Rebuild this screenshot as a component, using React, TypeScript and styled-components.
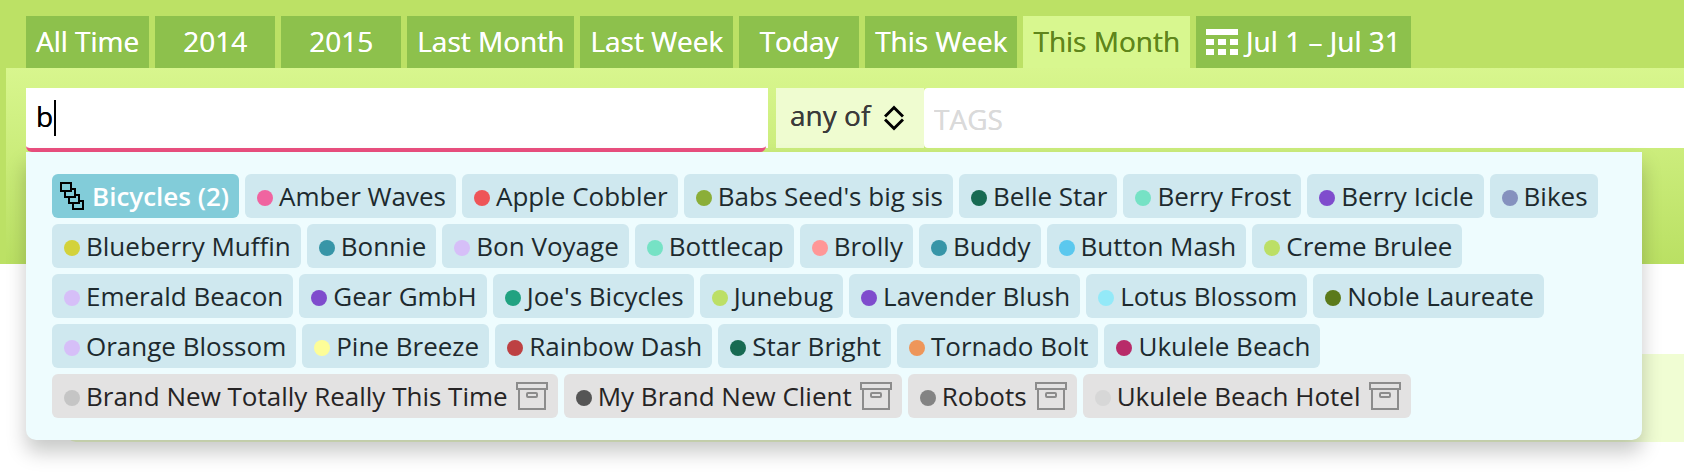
import React, { useState } from "react";
import styled, { createGlobalStyle, css } from "styled-components";

const GlobalStyle = createGlobalStyle`
  *, *::before, *::after { box-sizing: border-box; }
  body {
    margin: 0;
    background: #ffffff;
    font-family: "Open Sans", "Noto Sans", sans-serif;
    color: #1d2a2e;
    overflow-x: hidden;
  }
  button, input, select { font: inherit; color: inherit; }
`;

const Page = styled.main`
  position: relative;
  padding-bottom: 34px;
`;

const Header = styled.header`
  padding: 16px 0 0 6px;
  background: #bce165;
`;

const Tabs = styled.nav`
  display: flex;
  gap: 6px;
  padding-left: 20px;
`;

/* A shadow with no blur firms up the edges of the light-weight letters. */
const firmText = css`
  text-shadow: 0 0 0 currentColor;
`;

const Tab = styled.button<{ $active?: boolean }>`
  display: flex;
  align-items: center;
  justify-content: center;
  gap: 8px;
  min-width: 120px;
  height: 52px;
  padding: 0 10px;
  border: 0;
  font-size: 28px;
  line-height: 50px;
  white-space: nowrap;
  cursor: pointer;
  color: ${(p) => (p.$active ? "#5f861b" : "#ffffff")};
  background: ${(p) => (p.$active ? "#d8f78f" : "#8dc14c")};
  ${firmText}
`;

const TabLabel = styled.span`
  height: 52px;
`;

const FilterPanel = styled.section`
  position: relative;
  display: flex;
  min-height: 196px;
  padding: 20px 0 0 20px;
  align-items: flex-start;
  background: linear-gradient(#d8f68e, #bae063);
`;

const ClientField = styled.div`
  position: relative;
  flex: 0 0 742px;
  margin-right: 8px;
  height: 60px;
  background: #ffffff;
`;

const ClientInput = styled.input`
  display: block;
  width: calc(100% - 2px);
  height: 64px;
  padding: 0 10px 4px;
  border: 0;
  border-bottom: 4px solid #ea4f7f;
  border-radius: 0 0 6px 6px;
  outline: 0;
  background: transparent;
  font-size: 28px;
  color: #000000;
  caret-color: transparent;
  ${firmText}
`;

const Caret = styled.span`
  position: absolute;
  left: 28px;
  top: 12px;
  width: 2px;
  height: 36px;
  background: #000000;
`;

const ModeField = styled.div`
  position: relative;
  flex: 0 0 148px;
  height: 60px;
  background: #effcd0;
`;

const ModeSelect = styled.select`
  appearance: none;
  display: block;
  width: 100%;
  height: 100%;
  padding: 0 50px 6px 14px;
  border: 0;
  outline: 0;
  background: transparent;
  font-size: 28px;
  color: #3b3b3b;
  ${firmText}
`;

const ModeArrows = styled.svg`
  position: absolute;
  right: 20px;
  top: 17px;
  pointer-events: none;
`;

const TagsInput = styled.input`
  flex: 1;
  min-width: 0;
  height: 60px;
  padding: 2px 10px 0;
  border: 0;
  border-radius: 4px 0 0 4px;
  outline: 0;
  background: #ffffff;
  font-size: 28px;
  &::placeholder { color: #dadada; opacity: 1; ${firmText} }
`;

const Suggestions = styled.div`
  position: absolute;
  z-index: 2;
  left: 20px;
  right: 42px;
  top: 84px;
  display: flex;
  flex-wrap: wrap;
  gap: 6px;
  padding: 22px 26px;
  border-radius: 0 0 10px 10px;
  background: #eefcfe;
  box-shadow: 0 12px 20px rgba(0, 10, 0, 0.22);
`;

type Kind = "group" | "client" | "archived";

const chipKinds = {
  group: css`
    padding-left: 8px;
    gap: 8px;
    font-weight: 600;
    color: #ffffff;
    background: #82ccd9;
  `,
  client: css`
    background: #cfe8ef;
  `,
  archived: css`
    color: #262425;
    background: #e3e2e2;
  `,
};

const Chip = styled.button<{ $kind: Kind }>`
  display: flex;
  align-items: center;
  gap: 6px;
  height: 44px;
  padding: 0 10px 0 12px;
  border: 0;
  border-radius: 6px;
  font-size: 26px;
  line-height: 44px;
  white-space: nowrap;
  color: #1d2a2e;
  cursor: pointer;
  ${(p) => chipKinds[p.$kind]}
`;

const Dot = styled.span<{ $color: string }>`
  width: 16px;
  height: 16px;
  margin-top: 4px;
  border-radius: 50%;
  background: ${(p) => p.$color};
`;

const ArchiveMark = styled.svg`
  margin-left: 2px;
`;

const Report = styled.section`
  padding: 90px 0 0 66px;
`;

const ReportRow = styled.div`
  min-height: 88px;
  border-radius: 10px 0 0 10px;
  background: #f0fdd3;
`;

const CalendarIcon = () => (
  <svg width="32" height="26" viewBox="0 0 32 26" fill="currentColor" aria-hidden="true">
    <path d="M0 0h32v6H0zM0 10h8v6H0zM12 10h8v6h-8zM24 10h8v6h-8zM0 20h8v6H0zM12 20h8v6h-8zM24 20h8v6h-8z" />
  </svg>
);

const GroupIcon = () => (
  <svg width="24" height="28" viewBox="0 0 24 28" fill="#82ccd9" stroke="#000" strokeWidth="2" aria-hidden="true">
    <rect x="13" y="19" width="10" height="8" />
    <rect x="9" y="13" width="10" height="8" />
    <rect x="5" y="7" width="10" height="8" />
    <rect x="1" y="1" width="10" height="8" />
  </svg>
);

const ArchiveIcon = () => (
  <ArchiveMark width="32" height="28" viewBox="0 0 32 28" fill="none" stroke="#8c8c8c" strokeWidth="2" aria-hidden="true">
    <rect x="1" y="1" width="30" height="6" />
    <path d="M3 7v20h26V7" />
    <rect x="11" y="11" width="10" height="4" rx="1" />
  </ArchiveMark>
);

const tabs = ["All Time", "2014", "2015", "Last Month", "Last Week", "Today", "This Week", "This Month"];

const clients: [string, string][] = [
  ["Amber Waves", "#f064a0"],
  ["Apple Cobbler", "#ee5558"],
  ["Babs Seed's big sis", "#8bae38"],
  ["Belle Star", "#176a52"],
  ["Berry Frost", "#76e2c5"],
  ["Berry Icicle", "#7f4ccd"],
  ["Bikes", "#8591be"],
  ["Blueberry Muffin", "#d3d23b"],
  ["Bonnie", "#3795a7"],
  ["Bon Voyage", "#d6bff8"],
  ["Bottlecap", "#76e2c5"],
  ["Brolly", "#ff9797"],
  ["Buddy", "#3795a7"],
  ["Button Mash", "#5bc8ee"],
  ["Creme Brulee", "#bcdf66"],
  ["Emerald Beacon", "#d6bff8"],
  ["Gear GmbH", "#7f4ccd"],
  ["Joe's Bicycles", "#21a281"],
  ["Junebug", "#bcdf66"],
  ["Lavender Blush", "#7f4ccd"],
  ["Lotus Blossom", "#93e9f8"],
  ["Noble Laureate", "#5b7a1b"],
  ["Orange Blossom", "#d6bff8"],
  ["Pine Breeze", "#fdfd98"],
  ["Rainbow Dash", "#bd4143"],
  ["Star Bright", "#176a52"],
  ["Tornado Bolt", "#ee965a"],
  ["Ukulele Beach", "#b82b69"],
];

const archived: [string, string][] = [
  ["Brand New Totally Really This Time", "#c5c5c5"],
  ["My Brand New Client", "#555555"],
  ["Robots", "#838383"],
  ["Ukulele Beach Hotel", "#d7d7d7"],
];

export default function App() {
  const [active, setActive] = useState("This Month");
  const [query, setQuery] = useState("b");

  return (
    <>
      <GlobalStyle />
      <Page>
        <Header>
          <Tabs aria-label="Period">
            {tabs.map((name) => (
              <Tab key={name} type="button" $active={name === active} onClick={() => setActive(name)}>
                <TabLabel>{name}</TabLabel>
              </Tab>
            ))}
            <Tab type="button">
              <CalendarIcon />
              <TabLabel>Jul 1 – Jul 31</TabLabel>
            </Tab>
          </Tabs>
          <FilterPanel>
            <ClientField>
              <ClientInput aria-label="Clients" value={query} onChange={(e) => setQuery(e.target.value)} />
              {query === "b" && <Caret />}
            </ClientField>
            <ModeField>
              <ModeSelect aria-label="Tag matching" defaultValue="any of">
                <option>any of</option>
                <option>all of</option>
              </ModeSelect>
              <ModeArrows width="20" height="26" viewBox="0 0 20 26" fill="none" stroke="#000" strokeWidth="3" aria-hidden="true">
                <path d="M1 11.5 10 2.5l9 9M1 14.5l9 9 9-9" />
              </ModeArrows>
            </ModeField>
            <TagsInput aria-label="Tags" placeholder="TAGS" />
            <Suggestions>
              <Chip type="button" $kind="group">
                <GroupIcon />
                Bicycles (2)
              </Chip>
              {clients.map(([name, color]) => (
                <Chip key={name} type="button" $kind="client">
                  <Dot $color={color} />
                  {name}
                </Chip>
              ))}
              {archived.map(([name, color]) => (
                <Chip key={name} type="button" $kind="archived">
                  <Dot $color={color} />
                  {name}
                  <ArchiveIcon />
                </Chip>
              ))}
            </Suggestions>
          </FilterPanel>
        </Header>
        <Report>
          <ReportRow />
        </Report>
      </Page>
    </>
  );
}
